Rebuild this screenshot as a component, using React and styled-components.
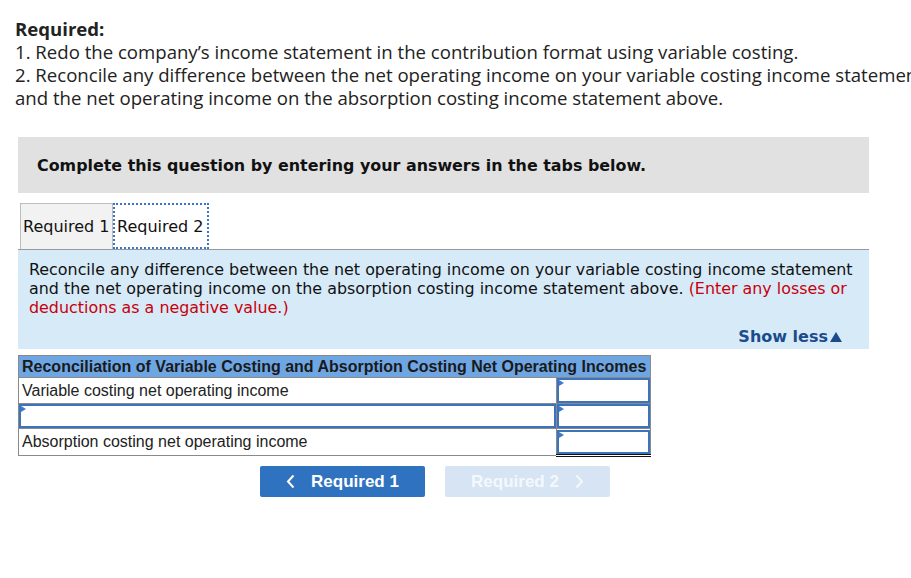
import React from "react";
import styled, { createGlobalStyle } from "styled-components";

const Global = createGlobalStyle`
  html, body { margin: 0; padding: 0; background: #fff; overflow: hidden; }
  body { width: 911px; height: 578px; }
`;

const Page = styled.div`
  padding-top: 17px;
`;

const Intro = styled.div`
  padding-left: 15px;
  font-family: "Open Sans", Lato, sans-serif;
  font-size: 18.6px;
  line-height: 23px;
  color: #222;
  white-space: nowrap;
`;

const Line = styled.div`
  font-weight: ${(p) => (p.$bold ? 700 : 400)};
`;

const Frame = styled.div`
  margin-left: 18px;
  width: 851px;
`;

const Banner = styled.div`
  margin-top: 28px;
  height: 56px;
  background: #e1e1e1;
  display: flex;
  align-items: center;
  padding-left: 19px;
  font-family: "DejaVu Sans", Verdana, sans-serif;
  font-weight: 700;
  font-size: 15.9px;
  color: #111;
`;

const Tabs = styled.div`
  margin-top: 8px;
  display: flex;
  border-bottom: 1px solid #999;
  padding-left: 2px;
`;

const Tab = styled.div`
  display: flex;
  align-items: center;
  box-sizing: border-box;
  padding: 0 2px;
  width: ${(p) => p.$w}px;
  font-family: "DejaVu Sans", Verdana, sans-serif;
  font-size: 16px;
  color: #111;
  white-space: nowrap;
  background: ${(p) => (p.$active ? "#fff" : "#f2f2f2")};
  border: ${(p) => (p.$active ? "2px dotted #3a74c4" : "1px solid #bdbdbd")};
  border-bottom: ${(p) => (p.$active ? "2px dotted #3a74c4" : "none")};
  margin-top: 2px;
  height: 46px;
`;

const Panel = styled.div`
  height: 99px;
  box-sizing: border-box;
  background: #d6eaf8;
  padding: 10px 8px 0 11px;
  display: flex;
  flex-direction: column;
  font-family: "DejaVu Sans", Verdana, sans-serif;
  font-size: 15.9px;
  line-height: 19px;
  color: #111;
`;

const Note = styled.span`
  color: #c8000a;
`;

const ShowLess = styled.div`
  margin-top: auto;
  margin-bottom: 3px;
  align-self: flex-end;
  margin-right: 18px;
  font-weight: 700;
  color: #1c4b8c;
  font-size: 16px;
  display: flex;
  align-items: center;
  gap: 1px;
`;

const Table = styled.table`
  margin-top: 6px;
  width: 633px;
  border-collapse: collapse;
  font-family: "Liberation Sans", Arial, sans-serif;
  font-size: 16px;
  color: #222;
`;

const Head = styled.th`
  background: #6ea6e4;
  border: 1px solid #8a8a8a;
  height: 21px;
  padding: 0 3px;
  text-align: left;
  font-weight: 700;
  color: #1a1a1a;
  white-space: nowrap;
`;

const Cell = styled.td`
  border: 1px solid #8a8a8a;
  height: ${(p) => p.$h}px;
  padding: ${(p) => (p.$input ? "0" : "0 3px")};
  width: ${(p) => (p.$w ? p.$w + "px" : "auto")};
  box-sizing: border-box;
  border-bottom: ${(p) => (p.$double ? "3px double #111" : "1px solid #8a8a8a")};
`;

const InputBox = styled.div`
  position: relative;
  box-sizing: border-box;
  height: ${(p) => p.$h}px;
  border: 2px solid #3c74bb;
  background: #fff;
  &::before {
    content: "";
    position: absolute;
    left: 0;
    top: 0;
    border-top: 3px solid transparent;
    border-bottom: 3px solid transparent;
    border-left: 5px solid #3c7ad0;
  }
`;

const Nav = styled.div`
  display: flex;
  gap: 20px;
  margin-top: 9px;
  padding-left: 260px;
`;

const NavButton = styled.div`
  width: 165px;
  height: 31px;
  border-radius: 2px;
  display: flex;
  align-items: center;
  justify-content: center;
  gap: 16px;
  font-family: "Liberation Sans", Arial, sans-serif;
  font-weight: 700;
  font-size: 17px;
  background: ${(p) => (p.$disabled ? "#d7e4f3" : "#2f72bf")};
  color: ${(p) => (p.$disabled ? "#f4f8fd" : "#fff")};
`;

const Chevron = ({ dir }) => (
  <svg width="9" height="15" viewBox="0 0 9 15">
    <path
      d={dir === "left" ? "M7.5 1.5 L2 7.5 L7.5 13.5" : "M1.5 1.5 L7 7.5 L1.5 13.5"}
      fill="none"
      stroke="currentColor"
      strokeWidth="2"
    />
  </svg>
);

export default function App() {
  return (
    <Page>
      <Global />
      <Intro>
        <Line $bold>Required:</Line>
        <Line>1. Redo the company’s income statement in the contribution format using variable costing.</Line>
        <Line>2. Reconcile any difference between the net operating income on your variable costing income statement</Line>
        <Line>and the net operating income on the absorption costing income statement above.</Line>
      </Intro>
      <Frame>
        <Banner>Complete this question by entering your answers in the tabs below.</Banner>
        <Tabs>
          <Tab $w={93}>Required 1</Tab>
          <Tab $w={96} $active>Required 2</Tab>
        </Tabs>
        <Panel>
          <div>
            Reconcile any difference between the net operating income on your variable costing income statement
            and the net operating income on the absorption costing income statement above.{" "}
            <Note>(Enter any losses or deductions as a negative value.)</Note>
          </div>
          <ShowLess>
            Show less
            <svg width="14" height="12" viewBox="0 0 14 12">
              <path d="M7 1 L13 11 L1 11 Z" fill="#1c4b8c" />
            </svg>
          </ShowLess>
        </Panel>
        <Table>
          <thead>
            <tr>
              <Head colSpan={2}>Reconciliation of Variable Costing and Absorption Costing Net Operating Incomes</Head>
            </tr>
          </thead>
          <tbody>
            <tr>
              <Cell $h={26}>Variable costing net operating income</Cell>
              <Cell $h={26} $w={94} $input>
                <InputBox $h={25} />
              </Cell>
            </tr>
            <tr>
              <Cell $h={25} $input>
                <InputBox $h={24} />
              </Cell>
              <Cell $h={25} $w={94} $input>
                <InputBox $h={24} />
              </Cell>
            </tr>
            <tr>
              <Cell $h={27}>Absorption costing net operating income</Cell>
              <Cell $h={27} $w={94} $input $double>
                <InputBox $h={24} />
              </Cell>
            </tr>
          </tbody>
        </Table>
      </Frame>
      <Nav>
        <NavButton>
          <Chevron dir="left" />
          Required 1
        </NavButton>
        <NavButton $disabled>
          Required 2
          <Chevron dir="right" />
        </NavButton>
      </Nav>
    </Page>
  );
}
